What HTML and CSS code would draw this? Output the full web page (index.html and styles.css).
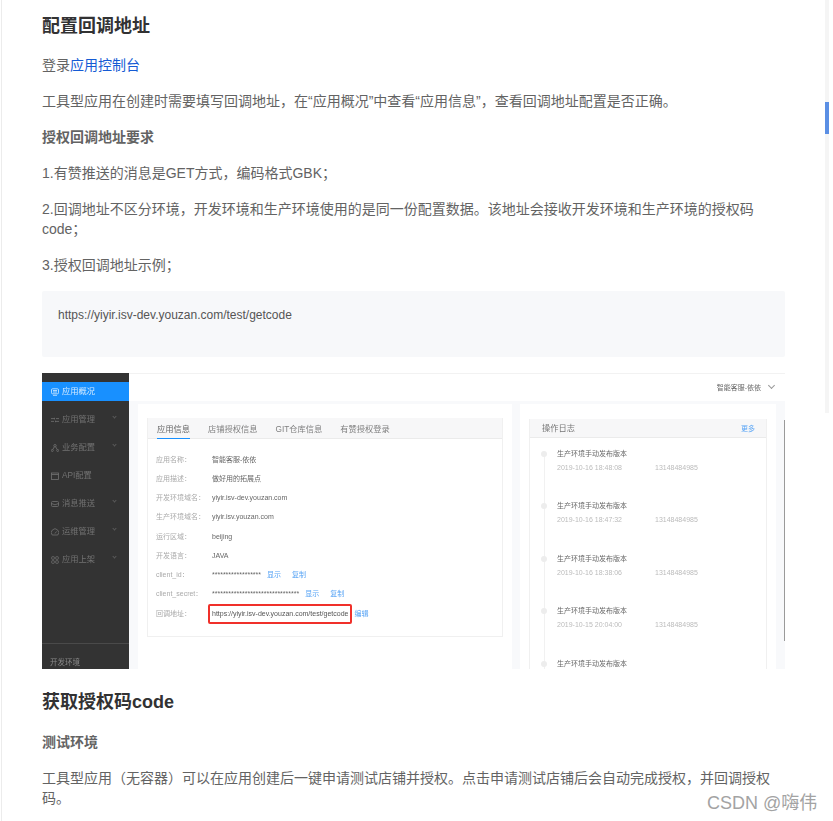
FILE: index.html
```html
<!DOCTYPE html>
<html lang="zh-CN">
<head>
<meta charset="utf-8">
<title>配置回调地址</title>
<link rel="stylesheet" href="styles.css">
</head>
<body>
<main class="article">
  <h2 class="heading">配置回调地址</h2>
  <p>登录<a href="#">应用控制台</a></p>
  <p>工具型应用在创建时需要填写回调地址，在“应用概况”中查看“应用信息”，查看回调地址配置是否正确。</p>
  <p class="strong">授权回调地址要求</p>
  <p>1.有赞推送的消息是GET方式，编码格式GBK；</p>
  <p>2.回调地址不区分环境，开发环境和生产环境使用的是同一份配置数据。该地址会接收开发环境和生产环境的授权码code；</p>
  <p>3.授权回调地址示例；</p>
  <pre class="code">https://yiyir.isv-dev.youzan.com/test/getcode</pre>

  <figure class="shot">
    <aside class="side">
      <ul class="menu">
        <li class="item active"><svg viewBox="0 0 8 8"><rect x=".5" y=".8" width="7" height="5" rx="1"/><path d="M2 2.500h4M2 4h4M2 7.300h4"/></svg><span>应用概况</span></li>
        <li class="item"><svg viewBox="0 0 8 8"><path d="M0 2.600h3.500M5 2.600h3M0 5.400h3M4.500 5.400h3.500M3.500 1.800v1.600M4.500 4.600v1.600"/></svg><span>应用管理</span><i class="chev"></i></li>
        <li class="item"><svg viewBox="0 0 8 8"><circle cx="4" cy="1.700" r="1.200"/><circle cx="1.300" cy="6.500" r="1"/><circle cx="6.700" cy="6.500" r="1"/><path d="M3.300 2.800 1.800 5.600M4.700 2.800l1.500 2.800"/></svg><span>业务配置</span><i class="chev"></i></li>
        <li class="item"><svg viewBox="0 0 8 8"><rect x=".5" y="1" width="7" height="6.500"/><path d="M.5 2.500h7"/></svg><span>API配置</span></li>
        <li class="item"><svg viewBox="0 0 8 8"><rect x=".5" y="1.500" width="7" height="5" rx="1"/><path d="M.5 3.500 4 4.800l3.500-1.300"/></svg><span>消息推送</span><i class="chev"></i></li>
        <li class="item"><svg viewBox="0 0 8 8"><path d="M1.200 7A3.700 3.700 0 1 1 6.800 7ZM4 5.500l1.500-2"/></svg><span>运维管理</span><i class="chev"></i></li>
        <li class="item"><svg viewBox="0 0 8 8"><rect x=".7" y=".7" width="2.600" height="2.600" rx=".6"/><rect x="4.700" y=".7" width="2.600" height="2.600" rx=".6"/><rect x=".7" y="4.700" width="2.600" height="2.600" rx=".6"/><rect x="4.700" y="4.700" width="2.600" height="2.600" rx=".6"/></svg><span>应用上架</span><i class="chev"></i></li>
      </ul>
      <div class="env">开发环境</div>
    </aside>
    <div class="pane">
      <header class="top"><span>智能客服-依依</span><i class="chev top-chev"></i></header>
      <div class="cards">
        <section class="card card-info">
          <div class="box">
            <nav class="tabs">
              <span class="tab on">应用信息</span>
              <span class="tab">店铺授权信息</span>
              <span class="tab">GIT仓库信息</span>
              <span class="tab">有赞授权登录</span>
            </nav>
            <dl class="rows">
              <div class="row"><dt>应用名称：</dt><dd>智能客服-依依</dd></div>
              <div class="row"><dt>应用描述：</dt><dd>做好用的拓展点</dd></div>
              <div class="row"><dt>开发环境域名：</dt><dd>yiyir.isv-dev.youzan.com</dd></div>
              <div class="row"><dt>生产环境域名：</dt><dd>yiyir.isv.youzan.com</dd></div>
              <div class="row"><dt>运行区域：</dt><dd>beijing</dd></div>
              <div class="row"><dt>开发语言：</dt><dd>JAVA</dd></div>
              <div class="row"><dt>client_id：</dt><dd>******************<b class="lnk l1">显示</b><b class="lnk l2">复制</b></dd></div>
              <div class="row"><dt>client_secret：</dt><dd>********************************<b class="lnk l1">显示</b><b class="lnk l2">复制</b></dd></div>
              <div class="row"><dt>回调地址：</dt><dd class="url"><span class="mark">https://yiyir.isv-dev.youzan.com/test/getcode</span><b class="lnk edit">编辑</b></dd></div>
            </dl>
          </div>
        </section>
        <section class="card card-log">
          <div class="box box-log">
            <div class="log-head"><span>操作日志</span><b class="lnk">更多</b></div>
            <ol class="log">
              <li><h4>生产环境手动发布版本</h4><p class="meta"><span>2019-10-16 18:48:08</span><span>13148484985</span></p></li>
              <li><h4>生产环境手动发布版本</h4><p class="meta"><span>2019-10-16 18:47:32</span><span>13148484985</span></p></li>
              <li><h4>生产环境手动发布版本</h4><p class="meta"><span>2019-10-16 18:38:06</span><span>13148484985</span></p></li>
              <li><h4>生产环境手动发布版本</h4><p class="meta"><span>2019-10-15 20:04:00</span><span>13148484985</span></p></li>
              <li><h4>生产环境手动发布版本</h4></li>
            </ol>
          </div>
        </section>
      </div>
      <div class="edge"></div>
    </div>
  </figure>

  <h2 class="heading second">获取授权码code</h2>
  <p class="strong">测试环境</p>
  <p>工具型应用（无容器）可以在应用创建后一键申请测试店铺并授权。点击申请测试店铺后会自动完成授权，并回调授权码。</p>
</main>
<div class="scrollbar"><div class="thumb"></div></div>
<div class="watermark">CSDN @嗨伟</div>
</body>
</html>
```

FILE: styles.css
```css
* { box-sizing: border-box; }
html, body { height: 821px; overflow: hidden; }
body {
  margin: 0;
  position: relative;
  background: #fff;
  font-family: "Liberation Sans", "Noto Sans CJK SC", sans-serif;
  color: #636363;
  font-size: 14px;
  line-height: 20px;
}
.article {
  width: 784px;
  height: 821px;
  margin-left: 1px;
  padding: 12px 0 0 40px;
  border-left: 1px solid #ececec;
}
.heading {
  margin: 0 0 15px;
  font-size: 18px;
  line-height: 28px;
  font-weight: 700;
  color: #323233;
}
.heading.second { margin: 19px 0 16px; }
.article > p { margin: 0 0 16px; }
.article a { color: #155bd4; text-decoration: none; }
.strong { font-weight: 700; }
.code {
  margin: 0 0 16px;
  height: 66px;
  padding: 14px 16px;
  background: #f7f8fa;
  border-radius: 2px;
  font: 12px/20px "Liberation Sans", sans-serif;
  color: #555;
}

/* screenshot figure */
.shot {
  margin: 0;
  height: 296px;
  display: flex;
  overflow: hidden;
  filter: blur(.6px);
  font-size: 7px;
  line-height: 10px;
}
.side {
  width: 87px;
  background: #333;
  color: #727272;
  padding-top: 9px;
  display: flex;
  flex-direction: column;
  justify-content: space-between;
}
.menu { list-style: none; margin: 0; padding: 0; }
.item {
  position: relative;
  height: 19px;
  margin-bottom: 9px;
  padding-left: 9px;
  display: flex;
  align-items: center;
  gap: 3px;
  font-size: 8.25px;
}
.item svg { width: 8px; height: 8px; fill: none; stroke: currentColor; stroke-width: .8; flex: none; }
.item.active { background: #1890ff; color: #d8ecff; }
.chev {
  position: absolute;
  width: 3px;
  height: 3px;
  border-right: 1px solid #5a5a5a;
  border-bottom: 1px solid #5a5a5a;
  transform: rotate(45deg);
  top: 5px;
  right: 13px;
}
.env {
  height: 26px;
  border-top: 1px solid #4a4a4a;
  padding: 14px 0 0 8px;
  font-size: 7.500px;
  color: #8a8a8a;
}
.pane {
  position: relative;
  width: 656px;
  background: #f8f9fb;
  display: flex;
  flex-direction: column;
}
.edge {
  position: absolute;
  right: 0;
  top: 47px;
  width: 1px;
  height: 221px;
  background: #9a9a9a;
}
.top {
  height: 28px;
  flex: none;
  background: #fff;
  border-top: 1px solid #f2f2f2;
  display: flex;
  justify-content: flex-end;
  align-items: center;
  position: relative;
  padding-right: 24px;
  color: #666;
}
.top-chev { top: 9px; right: 11px; border-color: #999; width: 5px; height: 5px; }
.cards {
  flex: 1;
  min-height: 0;
  padding: 3px 8px 0 9px;
  display: flex;
  gap: 8px;
}
.card { background: #fff; padding: 14px 9px 0; height: 270px; }
.card-info { width: 374px; }
.card-log { width: 256px; padding-top: 15px; }
.box { border: 1px solid #f0f0f0; border-top: 0; }
.box-log { height: 260px; overflow: hidden; }
.tabs {
  height: 21px;
  background: #f7f7f8;
  border-bottom: 1px solid #ebebeb;
  display: flex;
  padding-left: 9px;
  gap: 18px;
  font-size: 8.25px;
  color: #808080;
}
.tab { height: 21px; line-height: 23px; }
.tab.on { color: #666; border-bottom: 1px solid #1890ff; }
.rows { margin: 0; padding: 11px 0 13px 8px; }
.row { display: flex; height: 19.250px; align-items: center; }
.row dt { width: 56px; flex: none; color: #aaa; }
.row dd { margin: 0; display: flex; align-items: center; color: #666; }
.lnk { font-weight: 400; color: #5aa5f5; }
.l1 { margin-left: 6px; }
.l2 { margin-left: 11px; }
.mark {
  position: relative;
  color: #555;
}
.mark::after {
  content: "";
  position: absolute;
  left: -4px;
  right: -4px;
  top: -5px;
  bottom: -5px;
  border: 2px solid #f0302a;
  border-radius: 2px;
}
.edit { margin-left: 6px; }
.log-head {
  height: 19px;
  background: #f7f7f8;
  border-bottom: 1px solid #ebebeb;
  display: flex;
  justify-content: space-between;
  align-items: center;
  padding: 2px 11px 0 12px;
  font-size: 8.250px;
  color: #777;
}
.log-head .lnk { font-size: 7px; }
.log {
  list-style: none;
  margin: 0;
  padding: 11px 0 0 27px;
  position: relative;
}
.log::before {
  content: "";
  position: absolute;
  left: 14px;
  top: 16px;
  bottom: 0;
  width: 1px;
  background: #f1f1f1;
}
.log li { position: relative; height: 52.400px; }
.log li::before {
  content: "";
  position: absolute;
  left: -16px;
  top: 2px;
  width: 6px;
  height: 6px;
  border-radius: 50%;
  background: #ededed;
}
.log h4 { margin: 0 0 4px; font-size: 7px; font-weight: 400; color: #666; }
.meta { margin: 0; display: flex; color: #bbb; }
.meta span:first-child { width: 98px; }

.scrollbar {
  position: absolute;
  left: 825px;
  top: 0;
  width: 4px;
  height: 413px;
  background: #f5f5f5;
}
.thumb { position: absolute; top: 102px; left: 0; width: 4px; height: 32px; background: #5b8fe4; }
.watermark {
  position: absolute;
  left: 707px;
  top: 791px;
  font-size: 18px;
  line-height: 24px;
  color: #a3a3a3;
  white-space: nowrap;
}
```
